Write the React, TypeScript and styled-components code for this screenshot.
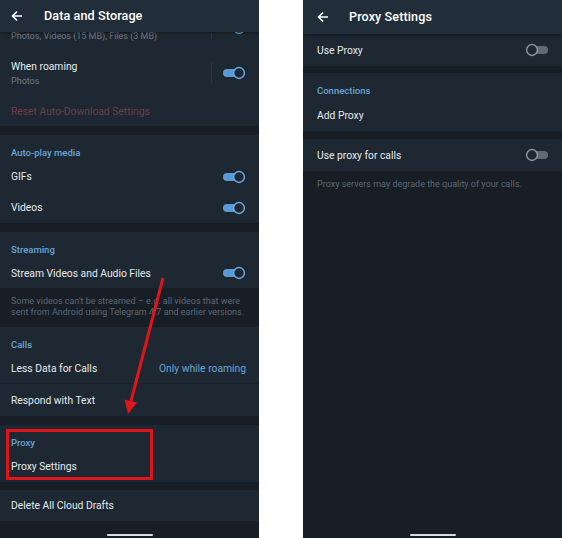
import styled, { createGlobalStyle } from "styled-components";

const GlobalStyle = createGlobalStyle`
  html, body {
    margin: 0;
    padding: 0;
    background: #ffffff;
  }
  body {
    font-family: Roboto, "Noto Sans", "Liberation Sans", sans-serif;
    -webkit-font-smoothing: antialiased;
  }
`;

const Stage = styled.div`
  width: 562px;
  height: 538px;
  display: flex;
  justify-content: space-between;
  background: #ffffff;
`;

const Phone = styled.div<{ $inset: number; $width: number }>`
  --inset: ${(p) => p.$inset}px;
  position: relative;
  width: ${(p) => p.$width}px;
  height: 538px;
  display: flex;
  flex-direction: column;
  overflow: hidden;
  background: #171e26;
`;

const TopBar = styled.div<{ $titleGap: number; $h: number }>`
  position: relative;
  z-index: 1;
  height: ${(p) => p.$h}px;
  flex-shrink: 0;
  display: flex;
  align-items: center;
  gap: ${(p) => p.$titleGap}px;
  padding-left: var(--inset);
  background: #222d3a;
  box-shadow: 0 1px 3px rgba(0, 0, 0, 0.45);
`;

const BarTitle = styled.div`
  color: #ffffff;
  font-size: 12.6px;
  font-weight: 500;
  letter-spacing: 0.1px;
  margin-top: -1px;
`;

const Scroll = styled.div`
  flex: 1;
  overflow: hidden;
`;

const List = styled.div<{ $offset: number }>`
  margin-top: ${(p) => -p.$offset}px;
  display: flex;
  flex-direction: column;
`;

const Section = styled.div`
  background: #1e2832;
  display: flex;
  flex-direction: column;
`;

const SectionTitle = styled.div`
  height: 26px;
  box-sizing: border-box;
  padding: 11px 13px 1px var(--inset);
  line-height: 14px;
  color: #6aa5d8;
  font-size: 9.5px;
  font-weight: 500;
`;

const Row = styled.div<{ $h: number; $divider?: boolean }>`
  height: ${(p) => p.$h}px;
  box-sizing: border-box;
  display: flex;
  align-items: center;
  justify-content: space-between;
  padding: 0 13px 0 var(--inset);
  background: #1e2832;
  box-shadow: ${(p) => (p.$divider ? "inset 0 -1px 0 #19212a" : "none")};
`;

const Texts = styled.div`
  display: flex;
  flex-direction: column;
  gap: 3px;
`;

const Label = styled.div<{ $tone?: "danger" }>`
  color: ${(p) => (p.$tone === "danger" ? "#6e3c47" : "#e6eaee")};
  font-size: 10.3px;
  line-height: 13px;
  white-space: nowrap;
`;

const Sub = styled.div`
  color: #6d7a87;
  font-size: 9px;
  line-height: 11px;
  white-space: nowrap;
`;

const PeekSub = styled(Sub)`
  align-self: flex-end;
  margin-bottom: 8px;
`;

const Value = styled.div`
  color: #6aa5d8;
  font-size: 10.3px;
  white-space: nowrap;
`;

const Trailing = styled.div`
  display: flex;
  align-items: center;
`;

const VSep = styled.span`
  width: 1px;
  height: 22px;
  background: #2b3540;
  margin-right: 10px;
`;

const Gap = styled.div<{ $h: number }>`
  height: ${(p) => p.$h}px;
  flex-shrink: 0;
`;

const Info = styled.div`
  padding: 8px 13px 9px var(--inset);
  color: #5c6773;
  font-size: 9px;
  line-height: 11px;
  white-space: pre-line;
`;

const NavBar = styled.div`
  height: 17px;
  flex-shrink: 0;
  display: flex;
  justify-content: center;
  align-items: flex-end;
  padding-bottom: 2px;
  box-sizing: border-box;
`;

const HomeBar = styled.div`
  width: 46px;
  height: 2px;
  border-radius: 2px;
  background: #d9dde1;
`;

const Overlay = styled.svg`
  position: absolute;
  inset: 0;
  pointer-events: none;
  z-index: 2;
`;

const Highlight = styled.div`
  position: absolute;
  left: 6px;
  top: 429px;
  width: 147px;
  height: 51px;
  box-sizing: border-box;
  border: 3px solid #e0141b;
  pointer-events: none;
  z-index: 2;
`;

const Back = () => (
  <svg width="11" height="10" viewBox="0 0 11 10">
    <path
      d="M10.5 5H1.6M5.6 1L1.4 5l4.2 4"
      fill="none"
      stroke="#ffffff"
      strokeWidth="1.6"
      strokeLinecap="round"
      strokeLinejoin="round"
    />
  </svg>
);

const Switch = ({ on }: { on: boolean }) => (
  <svg width="24" height="14" viewBox="0 0 24 14">
    {on ? (
      <>
        <rect x="1" y="3" width="18" height="8" rx="4" fill="#5b9bd3" />
        <circle cx="17" cy="7" r="5.4" fill="#1e2832" stroke="#6aaae0" strokeWidth="1.5" />
      </>
    ) : (
      <>
        <rect x="5" y="3" width="18" height="8" rx="4" fill="#5f6b77" />
        <circle cx="7" cy="7" r="5.4" fill="#1e2832" stroke="#8a949e" strokeWidth="1.5" />
      </>
    )}
  </svg>
);

const DataAndStorage = () => (
  <Phone $inset={11} $width={259}>
    <TopBar $titleGap={22} $h={32}>
      <Back />
      <BarTitle>Data and Storage</BarTitle>
    </TopBar>
    <Scroll>
      <List $offset={27}>
        <Section>
          <Row $h={45}>
            <PeekSub>Photos, Videos (15 MB), Files (3 MB)</PeekSub>
            <Trailing>
              <VSep />
              <Switch on />
            </Trailing>
          </Row>
          <Row $h={46}>
            <Texts>
              <Label>When roaming</Label>
              <Sub>Photos</Sub>
            </Texts>
            <Trailing>
              <VSep />
              <Switch on />
            </Trailing>
          </Row>
          <Row $h={30}>
            <Label $tone="danger">Reset Auto-Download Settings</Label>
          </Row>
        </Section>
        <Gap $h={9} />
        <Section>
          <SectionTitle>Auto-play media</SectionTitle>
          <Row $h={31}>
            <Label>GIFs</Label>
            <Switch on />
          </Row>
          <Row $h={31}>
            <Label>Videos</Label>
            <Switch on />
          </Row>
        </Section>
        <Gap $h={9} />
        <Section>
          <SectionTitle>Streaming</SectionTitle>
          <Row $h={30}>
            <Label>Stream Videos and Audio Files</Label>
            <Switch on />
          </Row>
        </Section>
        <Info>
          {"Some videos can't be streamed – e.g. all videos that were\nsent from Android using Telegram 4.7 and earlier versions."}
        </Info>
        <Section>
          <SectionTitle>Calls</SectionTitle>
          <Row $h={31} $divider>
            <Label>Less Data for Calls</Label>
            <Value>Only while roaming</Value>
          </Row>
          <Row $h={32}>
            <Label>Respond with Text</Label>
          </Row>
        </Section>
        <Gap $h={9} />
        <Section>
          <SectionTitle>Proxy</SectionTitle>
          <Row $h={31}>
            <Label>Proxy Settings</Label>
          </Row>
        </Section>
        <Gap $h={8} />
        <Section>
          <Row $h={31}>
            <Label>Delete All Cloud Drafts</Label>
          </Row>
        </Section>
      </List>
    </Scroll>
    <NavBar>
      <HomeBar />
    </NavBar>
    <Highlight />
    <Overlay width="259" height="538" viewBox="0 0 259 538">
      <line x1="163" y1="278" x2="131" y2="401" stroke="#e0141b" strokeWidth="3" />
      <polygon points="128,414 137,402.5 124.5,399.5" fill="#e0141b" />
    </Overlay>
  </Phone>
);

const ProxySettings = () => (
  <Phone $inset={14} $width={259}>
    <TopBar $titleGap={21} $h={34}>
      <Back />
      <BarTitle>Proxy Settings</BarTitle>
    </TopBar>
    <Scroll>
      <List $offset={0}>
        <Section>
          <Row $h={32}>
            <Label>Use Proxy</Label>
            <Switch on={false} />
          </Row>
        </Section>
        <Gap $h={7} />
        <Section>
          <SectionTitle>Connections</SectionTitle>
          <Row $h={32}>
            <Label>Add Proxy</Label>
          </Row>
        </Section>
        <Gap $h={8} />
        <Section>
          <Row $h={32}>
            <Label>Use proxy for calls</Label>
            <Switch on={false} />
          </Row>
        </Section>
        <Info>Proxy servers may degrade the quality of your calls.</Info>
      </List>
    </Scroll>
    <NavBar>
      <HomeBar />
    </NavBar>
  </Phone>
);

export default function App() {
  return (
    <>
      <GlobalStyle />
      <Stage>
        <DataAndStorage />
        <ProxySettings />
      </Stage>
    </>
  );
}
